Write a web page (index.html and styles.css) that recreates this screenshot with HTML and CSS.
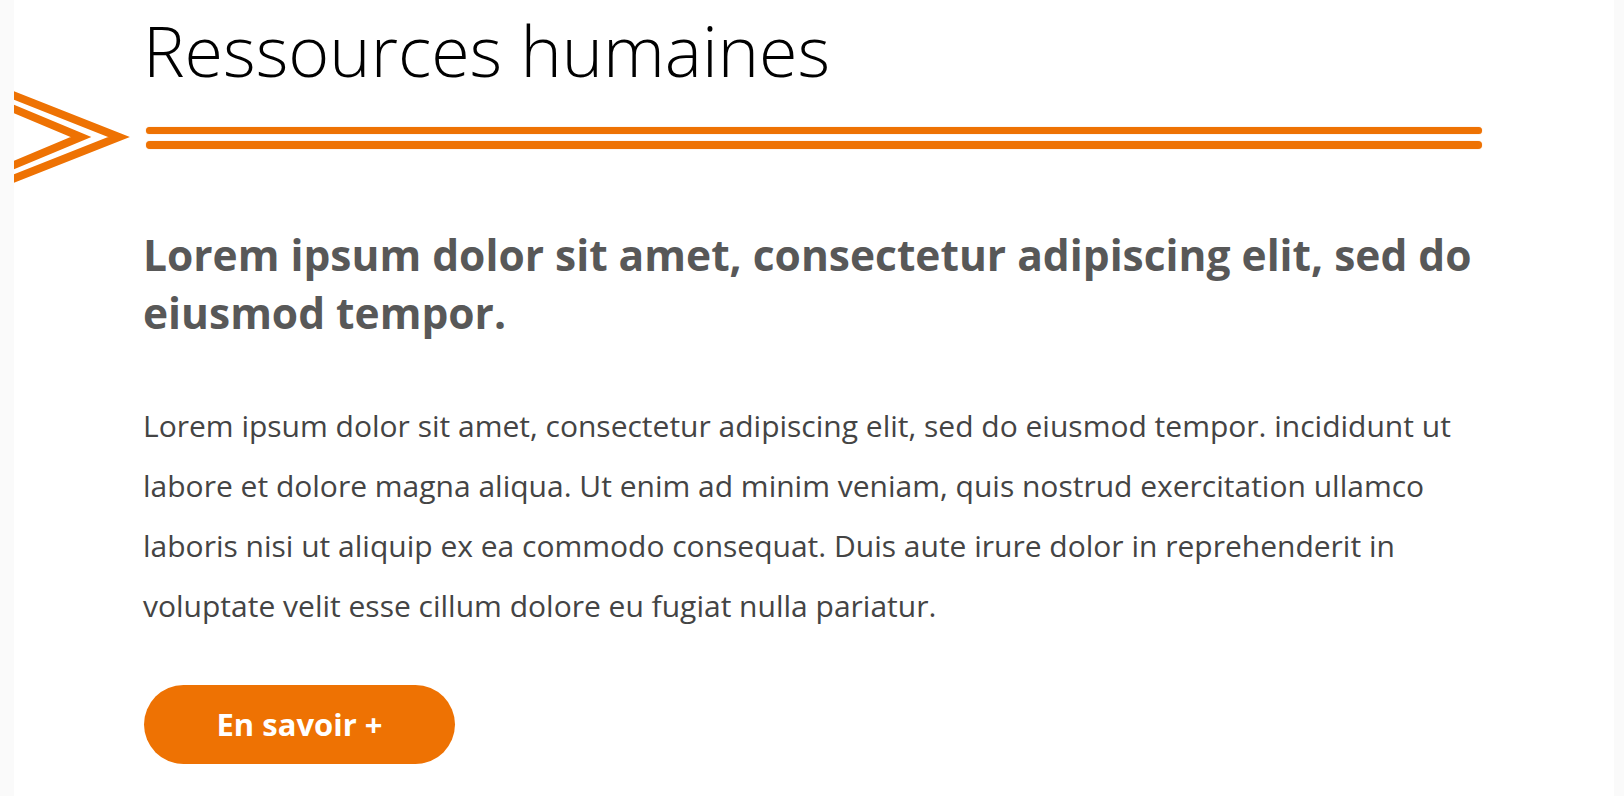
FILE: index.html
```html
<!DOCTYPE html>
<html lang="fr">
<head>
<meta charset="utf-8">
<title>Ressources humaines</title>
<link rel="stylesheet" href="styles.css">
</head>
<body>
<main class="panel">
  <h1 class="title">Ressources humaines</h1>
  <div class="divider">
    <svg class="divider-arrow" width="118" height="92" viewBox="0 0 118 92" aria-hidden="true">
      <polyline points="-20,-3.4 105,46 -20,95.4" fill="none" stroke="#ee7203" stroke-width="8" stroke-linejoin="miter" stroke-miterlimit="10"/>
      <polyline points="-20,9.6 67,46 -20,82.4" fill="none" stroke="#ee7203" stroke-width="8" stroke-linejoin="miter" stroke-miterlimit="10"/>
    </svg>
    <div class="divider-lines">
      <span class="divider-line"></span>
      <span class="divider-line"></span>
    </div>
  </div>
  <section class="content">
    <h2 class="lead">Lorem ipsum dolor sit amet, consectetur adipiscing elit, sed do eiusmod tempor.</h2>
    <p class="text">Lorem ipsum dolor sit amet, consectetur adipiscing elit, sed do eiusmod tempor. incididunt ut labore et dolore magna aliqua. Ut enim ad minim veniam, quis nostrud exercitation ullamco laboris nisi ut aliquip ex ea commodo consequat. Duis aute irure dolor in reprehenderit in voluptate velit esse cillum dolore eu fugiat nulla pariatur.</p>
    <a class="btn" href="#">En savoir +</a>
  </section>
</main>
</body>
</html>
```

FILE: styles.css
```css
html, body {
  margin: 0;
  padding: 0;
}
body {
  background: #fafafa;
  font-family: "Open Sans", "Noto Sans", sans-serif;
  height: 796px;
  overflow: hidden;
}
.panel {
  background: #ffffff;
  margin: 0 10px 0 14px;
  height: 796px;
}
.title {
  margin: 0;
  padding: 11.5px 0 0 129px;
  font-size: 70px;
  font-weight: 300;
  line-height: 76px;
  color: #000;
}
.divider {
  display: flex;
  align-items: center;
  height: 92px;
  margin-top: 3px;
}
.divider-arrow {
  display: block;
  flex: none;
}
.divider-lines {
  display: flex;
  flex-direction: column;
  gap: 7px;
  margin: 2px 0 0 14px;
  width: 1336px;
}
.divider-line {
  display: block;
  height: 7.5px;
  border-radius: 4px;
  background: #ee7203;
  box-shadow: 0 0 1px rgba(238, 114, 3, 0.6);
}
.content {
  padding: 0 0 0 129px;
  width: 1337px;
}
.lead {
  margin: 43.5px 0 0;
  font-size: 42.5px;
  font-weight: 700;
  line-height: 58px;
  color: #585858;
}
.text {
  margin: 54px 0 0;
  font-size: 30px;
  line-height: 60px;
  color: #444444;
}
.btn {
  display: flex;
  align-items: center;
  justify-content: center;
  width: 311px;
  height: 79px;
  margin: 48.5px 0 0 1px;
  border-radius: 40px;
  background: #ee7203;
  color: #fff;
  font-size: 31px;
  font-weight: 700;
  text-decoration: none;
}
```
